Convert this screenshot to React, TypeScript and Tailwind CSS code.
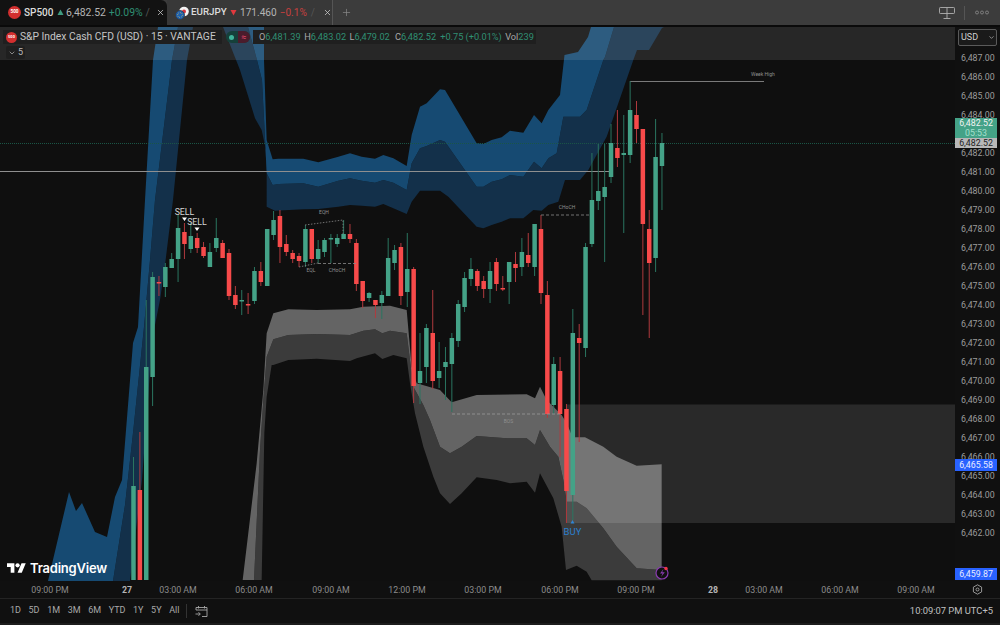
import React from "react";
import { X, Plus, ChevronDown } from "lucide-react";

type C = [number, number, number, number, 0 | 1];
// [wick top, body top, body bottom, wick low, 1=green 0=red]
const candles: C[] = [
  [457,486,580,580,1],[432,490,580,580,0],[300,367,580,580,1],[272,277,377,406,1],[276,282,283.5,296,0],
  [263,267,287,297,1],[253,259,268,268,1],[215,228,259,282,1],[223,232,244,259,0],[223,236,249,253,1],
  [233,238,248,253,0],[242,247,256,258,0],[243,252,267,267,1],[218,238,248,252,1],[240,243,258,258,0],
  [249,253,296,300,0],[286,295,305,309,0],[290,300,301.5,315,1],[293,304,305.5,314,0],[267,271,301,304,1],
  [262,271,282,286,0],[229,229,286,286,1],[211,220,235,240,1],[210,216,247,263,0],[235,244,252,256,0],
  [250,253,259,263,0],[253,256,261,267,0],[225,229,262,267,1],[229,229,259,263,0],[240,249,259,263,1],
  [238,240,252,257,1],[234,238,239.5,263,1],[234,238,244,247,1],[220,234,239,239,1],[224,234,239,243,0],
  [239,243,284,291,0],[281,281,301,308,0],[292,293,298,302,1],[300,300,305,318,0],[291,295,303,319,1],
  [238,258,296,296,1],[245,250,263,270,1],[243,247,296,305,0],[233,269,292,307,1],[267,269,386,403,0],
  [333,371,383,404,1],[324,328,367,383,1],[290,333,381,389,0],[342,371,378,388,1],[347,362,367,400,1],
  [333,338,364,412,1],[300,304,341,347,1],[272,278,307,312,1],[258,269,279,286,1],[269,271,286,291,0],
  [276,281,289,298,0],[262,271,289,303,1],[258,262,284,291,0],[276,288,289.5,291,0],[262,262,282,304,1],
  [252,264,268,282,0],[238,252,267,276,1],[233,255,263,267,0],[224,224,267,276,1],[215,229,293,304,0],
  [281,295,414,418,0],[357,364,405,414,1],[357,371,414,457,0],[404,409,491,523,0],[309,333,495,520,1],
  [324,338,343,442,0],[243,247,348,357,1],[153,200,244,247,1],[144,191,201,210,1],[144,187,197,262,1],
  [124,143,177,183,1],[110,148,158,167,0],[115,153,155,233,1],[81,110,155,163,1],[101,115,129,143,0],
  [129,129,224,315,0],[210,229,263,338,0],[119,157,258,272,1],[133,143,166,210,1],
];
const cx = (i: number) => 133.5 + i * 6.367;

const pts = (a: number[][]) => a.map((p) => p.join(",")).join(" ");
const z11 = (a: number[][]) => a.map(([x, y]) => [240 + x / 3, 60 + y / 3]);
const z12 = (a: number[][]) => a.map(([x, y]) => [230 + x / 3, 290 + y / 3]);
const z5 = (a: number[][]) => a.map(([x, y]) => [390 + x / 3, 340 + y / 3]);

const U = [
  [48,581],[69,492],[76,511],[82,503],[95,532],[107,537],[115,497],[122,480],[133,343],[138,327],[145,200],[153,60],[158,27],[160,-60],[264,-60],[264,60],
  ...z11([[80,240],[98,298],[115,296],[190,296],[235,307],[295,290],[330,280],[365,290],[405,296],[430,285],[460,295],[500,318],[515,225],[540,140],[560,130],[600,88],[615,90],[710,250],[730,252],[755,240],[785,232],[810,212],[850,218],[882,165],[905,190],[925,150],[960,105]]),
  [564.5,55],[578,52],[588,37],[591,27],[593,-60],
];
const M = [
  [113,581],[125,505],[133,433],[144,327],[150,260],[155,200],[172,60],[178,27],[180,-40],[246,-40],[248,27],[257,60],[262,80],
  ...z11([[75,235],[80,340],[98,375],[115,372],[190,370],[235,380],[295,362],[330,355],[365,362],[405,368],[430,360],[460,368],[500,390],[515,310],[540,265],[560,258],[600,240],[615,245],[710,380],[730,380],[755,365],[785,358],[810,345],[850,350],[882,305],[905,325],[925,295],[950,280],[970,170],[1020,170],[1040,150],[1090,0]]),
  [605,57],[614,27],[618,-60],
];
const L = [
  [130,581],[142,480],[148,400],[152,340],[160,300],[165,265],[173,200],[187,60],[193,27],[195,-20],[221,-20],[223,27],
  ...z11([[0,30],[45,175],[65,210],[80,280],[80,440],[105,452],[190,448],[235,447],[295,440],[330,435],[365,437],[405,440],[430,432],[460,445],[500,462],[515,425],[540,392],[600,392],[625,410],[710,500],[730,505],[755,495],[785,485],[810,475],[850,475],[880,450],[905,452],[925,435],[955,425],[975,360],[1020,360],[1045,330],[1100,230],[1180,0]]),
  [637,50],[649,50],[662,28],[664,27],[667,-60],
];
const rev = (a: number[][]) => [...a].reverse();

const G1 = [
  ...z12([[38,870],[50,770],[80,520],[100,300],[110,130],[130,70],[175,58],[260,60],[360,58],[400,50],[480,47],[530,60]]),
  ...z5([[65,80],[80,130],[150,150],[185,187],[260,165],[410,163],[435,175],[450,140],[470,180],[515,225],[530,250],[548,292],[585,292],[640,320],[680,350],[740,377],[815,373]]),
];
const G2 = [
  ...z12([[72,870],[90,480],[100,330],[110,200],[130,148],[175,135],[260,132],[360,135],[400,122],[435,118],[457,130],[480,122],[530,130]]),
  ...z5([[70,140],[100,195],[120,240],[150,320],[180,340],[215,320],[260,288],[350,295],[410,295],[435,315],[450,270],[480,320],[505,350],[520,420],[530,485],[560,485],[590,505],[640,565],[680,620],[740,685],[815,690]]),
];
const G3 = [
  ...z12([[95,870],[103,430],[110,320],[125,225],[130,225],[175,210],[260,206],[360,213],[380,205],[435,190],[457,207],[490,195],[530,205]]),
  ...z5([[60,130],[75,220],[100,320],[130,410],[150,460],[180,492],[215,460],[260,412],[320,420],[360,430],[410,425],[435,458],[450,400],[490,475],[515,560],[528,690],[560,677],[590,695],[605,721],[815,721]]),
];

const prices = Array.from({ length: 26 }, (_, i) => 6487 - i);
const hidden = [6483];
const fmt = (n: number) => (hidden.includes(n) ? "" : "6," + String(n - 6000) + ".00");

const ticks: [string, number, boolean][] = [
  ["09:00 PM",50,false],["27",127,true],["03:00 AM",178,false],["06:00 AM",254,false],["09:00 AM",331,false],
  ["12:00 PM",407,false],["03:00 PM",483,false],["06:00 PM",560,false],["09:00 PM",636,false],["28",713,true],
  ["03:00 AM",764,false],["06:00 AM",840,false],["09:00 AM",916,false],
];

function Chart() {
  return (
    <svg viewBox="0 27 955 554" width={955} height={554} className="block">
      <polygon points={pts([...M, ...rev(L)])} fill="#13304a" />
      <polygon points={pts([...U, ...rev(M)])} fill="#164a72" />
      <polygon points={pts([...G2, ...rev(G3)])} fill="#3b3b3b" />
      <polygon points={pts([...G1, ...rev(G2)])} fill="#646464" />
      <rect x={567} y={404.5} width={388} height={118.5} fill="#ffffff" fillOpacity={0.11} />

      <line x1={0} x2={955} y1={143.5} y2={143.5} stroke="#1a5546" strokeDasharray="1 1" />
      <line x1={0} x2={612} y1={171.5} y2={171.5} stroke="#8f8f8f" />
      <polyline points="630,81.5 764,81.5" fill="none" stroke="#7a7a7a" />

      {candles.map(([h, t, b, l, g], i) => {
        const x = cx(i);
        const body = g ? "#44a287" : "#f74a4a";
        const wick = g ? "#2a7560" : "#b03a3e";
        return (
          <g key={i}>
            <line x1={x} x2={x} y1={h} y2={l} stroke={wick} strokeWidth={1} />
            <rect x={x - 2.25} y={t} width={4.5} height={b - t} fill={body} />
          </g>
        );
      })}

      <g stroke="#8a8a8a" strokeWidth={0.8} fill="none">
        <path d="M305 225 L343 220 L343 234" strokeDasharray="1.5 1.5" />
        <path d="M299 267 L318 263" strokeDasharray="1.5 1.5" />
        <path d="M318 263.5 H356" strokeDasharray="3 2" />
        <path d="M541 215 H590" strokeDasharray="3 2" />
        <path d="M452 414 H562" strokeDasharray="3 2" stroke="#9a9a9a" />
      </g>
      <g fontSize={5} fill="#8f8f8f" textAnchor="middle">
        <text x={324} y={214}>EQH</text>
        <text x={311} y={272}>EQL</text>
        <text x={337} y={272}>CHoCH</text>
        <text x={567} y={209}>CHoCH</text>
        <text x={508.5} y={423}>BOS</text>
        <text x={763} y={76}>Week High</text>
      </g>
      <g fontSize={8.8} fill="#d4d4d4" textAnchor="middle">
        <text x={184.5} y={215}>SELL</text>
        <text x={197} y={225}>SELL</text>
      </g>
      <path d="M182 217.5 h5 l-2.5 3.5z M194.5 227.5 h5 l-2.5 3.5z" fill="#ffffff" />
      <path d="M570.5 523.5 h4 l-2 -3.5z" fill="#2f86d6" />
      <text x={572.5} y={534.5} fontSize={9.5} fill="#2b7fcc" textAnchor="middle">BUY</text>

      <g>
        <circle cx={662} cy={573} r={6} fill="#111" stroke="#8a3bb0" strokeWidth={1.2} />
        <path d="M663.5 569 L660 573.5 h2.6 L661 577 L664.8 572.2 h-2.6z" fill="#8a3bb0" />
        <circle cx={666} cy={568.5} r={1.7} fill="#f23645" />
      </g>
    </svg>
  );
}

function Sp500({ size }: { size: number }) {
  return (
    <span
      className="flex shrink-0 items-center justify-center rounded-full bg-[#d32f2f] font-bold text-white leading-none"
      style={{ width: size, height: size, fontSize: size * 0.36 }}
    >
      500
    </span>
  );
}

function Tab1() {
  return (
    <div className="flex h-full w-[167px] items-center rounded-tr-md bg-[#121212] pl-2 text-[10.4px] text-[#b5b5b5]">
      <Sp500 size={13} />
      <span className="ml-[3px] w-[30px] whitespace-nowrap text-[10px] font-medium text-[#dcdcdc]">SP500</span>
      <svg width="7" height="7" viewBox="0 0 7 7" className="ml-[3px]">
        <path d="M3.5 0.5 L6.5 6 H0.5z" fill="#3f9b80" />
      </svg>
      <span className="ml-[2px]">6,482.52</span>
      <span className="ml-[3px] text-[#2f8f73]">+0.09%</span>
      <span className="ml-[3px] text-[#555]">/</span>
      <X size={9} className="ml-[6px] text-[#cfcfcf]" strokeWidth={2} />
    </div>
  );
}

function Tab2() {
  return (
    <div className="flex h-full w-[166px] items-center border-r border-[#555] bg-[#383838] pl-[8px] text-[10.1px] text-[#b5b5b5]">
      <svg width="14" height="14" viewBox="0 0 14 14" className="shrink-0">
        <circle cx="9" cy="5.5" r="4.8" fill="#f4f4f4" />
        <circle cx="9" cy="5.5" r="2" fill="#d8343f" />
        <circle cx="5" cy="9" r="4.5" fill="#1d5fb0" stroke="#383838" strokeWidth="0.8" />
        <circle cx="5" cy="9" r="2.4" fill="none" stroke="#e6c94a" strokeWidth="0.8" strokeDasharray="0.8 0.9" />
      </svg>
      <span className="ml-[2px] w-[36px] whitespace-nowrap text-[9.8px] font-medium text-[#dcdcdc]">EURJPY</span>
      <svg width="7" height="7" viewBox="0 0 7 7" className="ml-[3px]">
        <path d="M0.5 1 H6.5 L3.5 6.5z" fill="#e0393e" />
      </svg>
      <span className="ml-[3px]">171.460</span>
      <span className="ml-[3px] text-[#c8403f]">−0.1%</span>
      <span className="ml-[4px] text-[#555]">/</span>
      <X size={9} className="ml-[8px] text-[#cfcfcf]" strokeWidth={2} />
    </div>
  );
}

function TopBar() {
  return (
    <div className="flex h-[25px] items-center bg-[#3c3c3c]">
      <Tab1 />
      <Tab2 />
      <Plus size={11} className="ml-[8px] text-[#8a8a8a]" strokeWidth={1.5} />
      <div className="flex-1" />
      <svg width="16" height="14" viewBox="0 0 16 14" fill="none" stroke="#b0b0b0" strokeWidth="0.9" className="mr-[9px]">
        <rect x="0.5" y="1.5" width="15" height="6" rx="0.8" />
        <path d="M8 1.5 V12.5 M4.5 12.5 H11.5" />
      </svg>
      <span className="mr-[10px] h-[14px] w-px bg-[#555]" />
      <svg width="14" height="5" viewBox="0 0 14 5" fill="none" stroke="#8c8c8c" strokeWidth="0.8" className="mr-[11px]">
        <circle cx="2" cy="2.5" r="1.5" /><circle cx="7" cy="2.5" r="1.5" /><circle cx="12" cy="2.5" r="1.5" />
      </svg>
    </div>
  );
}

function Ohlc({ k, v }: { k: string; v: string }) {
  return (
    <span className="w-[45.3px] shrink-0">
      <span className="text-[#a8a8a8]">{k}</span>
      <span className="text-[#2f8f73]">{v}</span>
    </span>
  );
}

function Legend() {
  return (
    <div className="absolute left-0 top-0 flex h-[33px] w-[955px] flex-col bg-white/10 pl-[3px]">
      <div className="mt-[3px] flex h-[14px] items-center">
        <div className="flex h-[14px] w-[219px] items-center bg-[#1f1f1f] pl-[3px] text-[10.3px] text-[#c6c6c6]">
          <Sp500 size={11} />
          <span className="ml-[3px] whitespace-nowrap">S&amp;P Index Cash CFD (USD) · 15 · VANTAGE</span>
        </div>
        <div className="ml-[4px] flex h-[12px] w-[24px] items-center overflow-hidden rounded-full bg-[#15403a]">
          <span className="ml-[3px] h-[5px] w-[5px] rounded-full bg-[#3fb39a]" />
          <span className="ml-[4px] flex h-full flex-1 items-center justify-center bg-[#4a1c2c] text-[9px] leading-none text-[#e0476a]">≈</span>
        </div>
        <div className="ml-[3px] flex h-[14px] w-[283px] items-center whitespace-nowrap bg-[#1f1f1f] pl-[6px] text-[9.2px]">
          <Ohlc k="O" v="6,481.39" />
          <Ohlc k="H" v="6,483.02" />
          <Ohlc k="L" v="6,479.02" />
          <Ohlc k="C" v="6,482.52" />
          <span className="w-[65px] shrink-0 text-[#2f8f73]">+0.75 (+0.01%)</span>
          <Ohlc k="Vol" v="239" />
        </div>
      </div>
      <div className="ml-[3px] mt-[2px] flex h-[13px] w-[19px] items-center justify-center gap-[2px] rounded-[2px] bg-[#1f1f1f] text-[9px] text-[#bdbdbd]">
        <ChevronDown size={8} strokeWidth={2} />
        <span>5</span>
      </div>
    </div>
  );
}

function Badge({ top, cls, h, children }: { top: number; cls: string; h: string; children: React.ReactNode }) {
  return (
    <div className={"absolute left-0 w-[42px] text-center " + h + " " + cls} style={{ top }}>
      {children}
    </div>
  );
}

function PriceAxis() {
  return (
    <div className="relative h-full w-[45px] bg-[#101010] text-[8.8px] text-[#9c9c9c]">
      <div className="mx-[3px] mt-[2px] flex h-[17px] w-[39px] items-center justify-between rounded-[2px] border border-[#5a5a5a] bg-[#1a1a1a] pl-[2px] pr-[1px] text-[9px] text-[#d0d0d0]">
        <span>USD</span>
        <ChevronDown size={7} strokeWidth={2} />
      </div>
      <div className="mt-[3px] flex flex-col pl-[6px]">
        {prices.map((p) => (
          <div key={p} className="h-[19px] whitespace-nowrap leading-[19px]">{fmt(p)}</div>
        ))}
      </div>
      <div className="absolute left-0 top-[91px] w-[42px] bg-[#44a287] text-center leading-[10px]">
        <div className="text-[#f2f2f2]">6,482.52</div>
        <div className="text-[#a5e0cd]">05:53</div>
      </div>
      <Badge top={111} h="leading-[10px]" cls="bg-[#b8b8b8] text-[#222]">6,482.52</Badge>
      <Badge top={432} h="leading-[12px]" cls="bg-[#2962ff] text-[#e8ecff]">6,465.58</Badge>
      <Badge top={541} h="leading-[12px]" cls="bg-[#2962ff] text-[#e8ecff]">6,459.87</Badge>
    </div>
  );
}

function TimeAxis() {
  return (
    <div className="relative h-[17px] shrink-0 bg-[#101010] text-[8.8px] text-[#8c8c8c]">
      {ticks.map(([t, x, b]) => (
        <span
          key={t + x}
          className={"absolute top-[3px] -translate-x-1/2 whitespace-nowrap " + (b ? "font-bold text-[#b5b5b5]" : "")}
          style={{ left: x }}
        >
          {t}
        </span>
      ))}
      <svg width="11" height="11" viewBox="0 0 11 11" className="absolute left-[972px] top-[3px]" fill="none" stroke="#a8a8a8">
        <path d="M5.5 0.8 L9.6 3.1 V7.9 L5.5 10.2 L1.4 7.9 V3.1z" strokeWidth="0.9" />
        <circle cx="5.5" cy="5.5" r="1.5" strokeWidth="0.9" />
      </svg>
    </div>
  );
}

function BottomBar() {
  const ranges = ["1D", "5D", "1M", "3M", "6M", "YTD", "1Y", "5Y", "All"];
  return (
    <div className="flex h-[25px] shrink-0 items-center border-t border-[#242424] bg-[#101010] pl-[10px] pr-[7px] text-[9px] text-[#a8a8a8]">
      <div className="flex gap-[7.6px]">
        {ranges.map((r) => (
          <span key={r}>{r}</span>
        ))}
      </div>
      <span className="ml-[7px] h-[14px] w-px bg-[#333]" />
      <svg width="13" height="13" viewBox="0 0 13 13" fill="none" stroke="#a8a8a8" strokeWidth="0.9" className="ml-[8px]">
        <path d="M1 5 V2.5 H12 V11.5 H7 M1 5 H12 M3.5 1 V3.5 M9.5 1 V3.5 M0.5 9 H5 M3.5 7.2 L5.3 9 L3.5 10.8" />
      </svg>
      <div className="flex-1" />
      <span className="text-[9.4px] text-[#c0c0c0]">10:09:07 PM UTC+5</span>
    </div>
  );
}

export default function App() {
  return (
    <div className="flex h-[625px] w-[1000px] flex-col overflow-hidden bg-[#1c1c1c]" style={{ fontFamily: "Roboto, sans-serif" }}>
      <TopBar />
      <div className="h-[2px] shrink-0 bg-[#0a0a0a]" />
      <div className="flex h-[554px] shrink-0">
        <div className="relative h-full w-[955px] overflow-hidden bg-[#0f0f0f]">
          <Chart />
          <Legend />
          <div className="absolute bottom-[5px] left-[7px] flex items-center gap-[4px] text-white" style={{ fontFamily: "Inter, sans-serif" }}>
            <svg width="19" height="15" viewBox="0 0 36 28" fill="#ffffff">
              <path d="M14 22H7V11H0V4h14v18zM28 22h-8l7.5-18h8L28 22z" />
              <circle cx="20" cy="8" r="4" />
            </svg>
            <span className="text-[13px] font-semibold leading-none tracking-[-0.2px]">TradingView</span>
          </div>
        </div>
        <PriceAxis />
      </div>
      <TimeAxis />
      <BottomBar />
    </div>
  );
}
